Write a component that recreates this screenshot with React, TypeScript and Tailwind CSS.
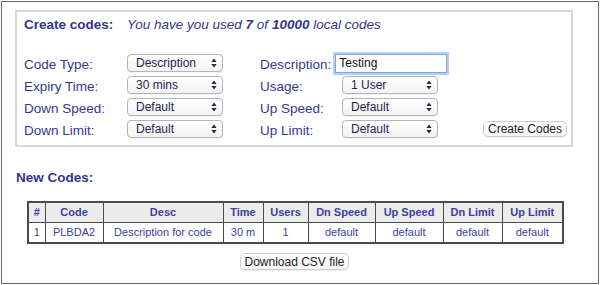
import React from "react";

const labelCls = "text-[13.5px] leading-[16px] text-[#37378f] pt-[4px]";

function Arrows() {
  return (
    <svg width="6" height="10" viewBox="0 0 6 10" className="shrink-0">
      <path d="M3 0.5 L5.6 4 L0.4 4 Z" fill="#24245a" />
      <path d="M3 9.5 L5.6 6 L0.4 6 Z" fill="#24245a" />
    </svg>
  );
}

function Select({ value }: { value: string }) {
  return (
    <div className="w-[96px] h-[18px] rounded-[4px] border border-[#b4b4b4] bg-gradient-to-b from-white to-[#f3f3f3] flex items-center justify-between pl-[8px] pr-[5px] shadow-[0_1px_0_rgba(0,0,0,0.05)]">
      <span className="text-[12px] leading-[14px] text-[#1f1f52]">{value}</span>
      <Arrows />
    </div>
  );
}

function Button({ text, className }: { text: string; className?: string }) {
  return (
    <div
      className={
        "rounded-[5px] border border-[#cdcdcd] bg-gradient-to-b from-white to-[#f6f6f6] flex items-center justify-center text-[12px] leading-[14px] text-[#222] shadow-[0_1px_0_rgba(0,0,0,0.06)] " +
        (className ?? "")
      }
    >
      {text}
    </div>
  );
}

const rows = [
  { l1: "Code Type:", v1: "Description", l2: "Description:", v2: null },
  { l1: "Expiry Time:", v1: "30 mins", l2: "Usage:", v2: "1 User" },
  { l1: "Down Speed:", v1: "Default", l2: "Up Speed:", v2: "Default" },
  { l1: "Down Limit:", v1: "Default", l2: "Up Limit:", v2: "Default" },
];

const cols = [
  { h: "#", w: "w-[17px]", v: "1" },
  { h: "Code", w: "w-[58px]", v: "PLBDA2" },
  { h: "Desc", w: "w-[120px]", v: "Description for code" },
  { h: "Time", w: "w-[40px]", v: "30 m" },
  { h: "Users", w: "w-[45px]", v: "1" },
  { h: "Dn Speed", w: "w-[67px]", v: "default" },
  { h: "Up Speed", w: "w-[68px]", v: "default" },
  { h: "Dn Limit", w: "w-[59px]", v: "default" },
  { h: "Up Limit", w: "w-[61px]", v: "default" },
];

export default function App() {
  return (
    <div className="w-[600px] h-[285px] bg-white p-px font-['Liberation_Sans',Arial,sans-serif]">
      <div className="h-full border border-[#6a6a6a] pt-[8px] pl-[13px]">
        <div className="w-[558px] h-[137px] border-2 border-[#d8d8d8] pl-[7px] pt-[5px]">
          <div className="flex items-baseline text-[13.5px] leading-[16px] text-[#35358e]">
            <span className="font-bold w-[103px]">Create codes:</span>
            <span className="italic">
              You have you used <b>7</b> of <b>10000</b> local codes
            </span>
          </div>
          <div className="mt-[19px] flex flex-col">
            {rows.map((r, i) => (
              <div key={i} className="h-[22px] flex items-center">
                <span className={labelCls + " w-[103px]"}>{r.l1}</span>
                <Select value={r.v1} />
                {r.v2 === null ? (
                  <>
                    <span className={labelCls + " ml-[37px]"}>{r.l2}</span>
                    <div className="ml-[4px] w-[112px] h-[19px] border border-[#7aa7e0] shadow-[0_0_0_2px_rgba(120,170,235,0.55)] bg-white flex items-center pl-[3px] text-[12px] leading-[14px] text-[#111]">
                      Testing
                    </div>
                  </>
                ) : (
                  <>
                    <span className={labelCls + " ml-[37px] w-[82px]"}>{r.l2}</span>
                    <Select value={r.v2} />
                  </>
                )}
                {i === 3 && (
                  <Button text="Create Codes" className="ml-[45px] w-[84px] h-[16px]" />
                )}
              </div>
            ))}
          </div>
        </div>

        <div className="ml-[1px] mt-[23px] text-[13.5px] leading-[16px] font-bold text-[#35358e]">
          New Codes:
        </div>

        <div className="ml-[13px] mt-[15px] w-[535px] flex flex-col items-center">
          <table className="border-collapse w-[535px] text-[11px] text-[#4040a0] table-fixed border-2 border-[#4a4a4a]">
            <thead>
              <tr className="h-[20px] bg-[#ececec]">
                {cols.map((c) => (
                  <th key={c.h} className={"border border-[#4a4a4a] font-bold text-center p-0 " + c.w}>
                    {c.h}
                  </th>
                ))}
              </tr>
            </thead>
            <tbody>
              <tr className="h-[21px]">
                {cols.map((c) => (
                  <td key={c.h} className="border border-[#4a4a4a] text-center p-0">
                    {c.v}
                  </td>
                ))}
              </tr>
            </tbody>
          </table>
          <Button text="Download CSV file" className="mt-[9px] w-[109px] h-[17px] -ml-[2px]" />
        </div>
      </div>
    </div>
  );
}
